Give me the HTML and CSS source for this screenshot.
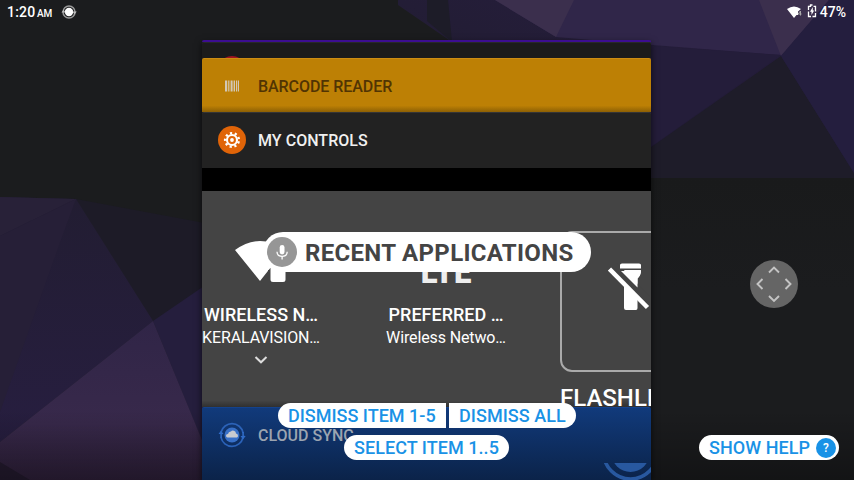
FILE: index.html
```html
<!DOCTYPE html>
<html lang="en">
<head>
<meta charset="utf-8">
<title>Recent applications</title>
<link rel="stylesheet" href="styles.css">
</head>
<body>
<div class="screen">
  <svg class="wallpaper" viewBox="0 0 854 480" aria-hidden="true">
    <defs>
      <linearGradient id="plum" x1="0" y1="0" x2="0" y2="1"><stop offset="0" stop-color="#302547"/><stop offset=".65" stop-color="#38294b"/><stop offset="1" stop-color="#30213c"/></linearGradient>
      <linearGradient id="navy" x1="0" y1="0" x2="0" y2="1"><stop offset="0" stop-color="#221d32"/><stop offset="1" stop-color="#271e40"/></linearGradient>
      <linearGradient id="topnavy" x1="0" y1="1" x2="1" y2="0"><stop offset="0" stop-color="#1e1c2b"/><stop offset="1" stop-color="#281e41"/></linearGradient>
      <linearGradient id="shade" x1="0" y1="0" x2="0" y2="1"><stop offset="0" stop-color="#000" stop-opacity="0"/><stop offset="1" stop-color="#000" stop-opacity=".3"/></linearGradient>
    </defs>
    <path fill="#1b1c1e" d="M0 0H854V480H0z"/>
    <path fill="#1d1b27" d="M76 199L210 224V480H0V197z"/>
    <path fill="url(#navy)" d="M0 197L76 199L153 321L0 442z"/>
    <path fill="#282138" d="M0 197L76 199L0 236z"/>
    <path fill="#261f37" d="M0 236L76 199L61 240L0 412z"/>
    <path fill="#251e3d" d="M153 321L210 282V460z"/>
    <path fill="url(#plum)" d="M0 442L153 321L202 440V480H0z"/>
    <path fill="#251b30" d="M0 462L30 480H0z"/>
    <path fill="url(#topnavy)" d="M398 0H854V178H640V42H452L398 5z"/>
    <path fill="#1d1c28" d="M427 0H448L452 42L427 21z"/>
    <path fill="#302649" d="M495 0H800L781 55L640 44L556 37z"/>
    <path fill="#3b2f4d" d="M495 0H574L556 37zM759 0H829L781 56z"/>
    <path fill="#241d3a" d="M640 45L781 55L651 147z"/>
    <path fill="#1e1c29" d="M781 56L854 173V178H640V155z"/>
    <path fill="#241e3e" d="M829 0H854V173L781 56z"/>
    <linearGradient id="charcoal" x1="0" y1="0" x2="0" y2="1"><stop offset="0" stop-color="#191a1b"/><stop offset="1" stop-color="#1b1c1e"/></linearGradient>
    <path fill="url(#charcoal)" d="M640 178H854V290H640z"/>
    <path fill="url(#shade)" d="M0 410H854V480H0z"/>
  </svg>

  <header class="status">
    <span class="clock">1:20 <small>AM</small></span>
    <svg class="sync-dot" viewBox="0 0 16 16" aria-hidden="true"><circle cx="8" cy="8" r="4.200" fill="#fff"/><circle cx="8" cy="8" r="6" fill="none" stroke="#999" stroke-width="1.500"/><path fill="#bbb" d="M.5 8.500L2.500 5.500 4.500 8.500zM11.500 7.500H15.700L13.600 10.500z"/></svg>
    <span class="status-right">
      <svg class="wifi" viewBox="0 0 15 13" aria-hidden="true"><path fill="#fff" d="M0 3Q7-2 14 3L11 5.500V9H9.500L7 12z"/><path fill="none" stroke="#aaa" d="M13.500 9.500V5L11 8H14.500"/></svg>
      <svg class="battery" viewBox="0 0 10 14" aria-hidden="true"><path fill="none" stroke="#fff" stroke-width="1.300" d="M5.500 1H3.500V2.300H1.500V6M1.500 7.500V12.500H4M5.500 12.500H8.500V9M8.500 7.500V2.300H6.500"/><path fill="#fff" d="M5.800 3L3 7.700H4.500V11L7.200 6.500H5.800z"/></svg>
      <span>47%</span>
    </span>
  </header>

  <main class="stack">
    <section class="card sliver"></section>
    <section class="card dark"><i class="red-icon"></i></section>
    <section class="card barcode">
      <div class="card-head">
        <svg viewBox="0 0 28 28" aria-hidden="true"><path fill="#d3c8b5" d="M7 8.500h2.200v11H7zM10.200 8.500h1.200v11h-1.200zM12.600 8.500h2v11h-2zM15.600 8.500h1.400v11h-1.400zM18 8.500h1v11h-1zM19.800 8.500h1.200v11h-1.200z"/></svg>
        <span>BARCODE READER</span>
      </div>
    </section>
    <section class="card controls">
      <div class="card-head">
        <svg viewBox="0 0 28 28" aria-hidden="true"><circle cx="14" cy="14" r="14" fill="#e06408"/><circle cx="14" cy="14" r="5" fill="none" stroke="#fff" stroke-width="2.100"/><circle cx="14" cy="14" r="6.900" fill="none" stroke="#fff" stroke-width="2.400" stroke-dasharray="2.200 2.617" stroke-dashoffset="-1.350"/><circle cx="14" cy="14" r="1.900" fill="#fff"/></svg>
        <span class="bright">MY CONTROLS</span>
      </div>
      <div class="black-bar"></div>
      <div class="tiles">
        <div class="tile">
          <svg class="tile-icon" viewBox="0 0 60 50" aria-hidden="true"><path fill="#fff" d="M4 10Q29-8 54 10L36.500 31.500 29 41zM42 25h10q2.500 0 2.500 2.500v12q0 2.500-2.500 2.500H42q-2.500 0-2.500-2.500V27.500q0-2.500 2.500-2.500z"/><path fill="none" stroke="#444" stroke-width="2" d="M38 42V30"/></svg>
          <b>WIRELESS N…</b>
          <span>KERALAVISION…</span>
          <svg class="chevron" viewBox="0 0 14 8" aria-hidden="true"><path fill="none" stroke="#ddd" stroke-width="2" d="M1.500 1L7 6.300 12.500 1"/></svg>
        </div>
        <div class="tile">
          <div class="lte">LTE</div>
          <b>PREFERRED …</b>
          <span>Wireless Netwo…</span>
        </div>
        <div class="flash-tile">
          <div class="flash-box">
            <svg viewBox="0 0 42 50" aria-hidden="true"><path fill="#fff" d="M12 7H33Q33 12 29.500 15.500V45Q29.500 47 28 47H18Q16 47 16 45V15.500Q12 12 12 7z"/><path stroke="#444" stroke-width="11" d="M4 3L42 41"/><path stroke="#fff" stroke-width="4.500" d="M1.500 6L39.500 44.500"/><path fill="#fff" d="M12 2Q12 .5 14 .5H31Q33 .5 33 2V5.500H12zM13 8H33Q33 12 29.500 15.500V24.500z"/></svg>
          </div>
          <b>FLASHLIGHT</b>
        </div>
      </div>
    </section>
    <section class="card cloud">
      <div class="card-head">
        <svg viewBox="0 0 28 28" aria-hidden="true"><circle cx="14" cy="14" r="11.300" fill="none" stroke="#2b62b8" stroke-width="1.700" stroke-dasharray="30 5.500" stroke-dashoffset="-2.800"/><path fill="#2f6bc6" d="M.5 13L3 9.500 5.500 13 3.900 13.300V17H2.300V13zM22.500 15L25 18.500 27.700 15 25.900 14.700V11H24.300V15z"/><circle cx="14" cy="14" r="7.500" fill="#3870c8"/><path fill="#c9cbd0" d="M9.500 16.500Q8 16.500 8 14.700T10 13Q10.500 10.300 13 10.500 14 9 16 9.800 18 10.500 18 12.500 20 12.800 20 14.800T18.500 16.500z"/></svg>
        <span>CLOUD SYNC</span>
      </div>
      <svg class="splash" viewBox="0 0 49 17" aria-hidden="true"><circle cx="28.500" cy="-10" r="19" fill="#28589f"/><circle cx="28.500" cy="-11" r="27" fill="none" stroke="#28589f" stroke-width="3.600"/></svg>
    </section>
  </main>

  <div class="title-pill">
    <svg viewBox="0 0 30 30" aria-hidden="true"><circle cx="15" cy="15" r="15" fill="#969696"/><rect x="12.700" y="8" width="4.800" height="9.500" rx="2.400" fill="#fff"/><path fill="none" stroke="#fff" stroke-width="1.300" d="M10 14.700Q10 19.300 15.100 19.300T20.200 14.700M15.100 19V22.500"/></svg>
    <span>RECENT APPLICATIONS</span>
  </div>
  <div class="pills dismiss"><button class="pill first">DISMISS ITEM 1-5</button><button class="pill last">DISMISS ALL</button></div>
  <button class="pill select">SELECT ITEM 1..5</button>
  <button class="pill help">SHOW HELP<span class="help-dot">?</span></button>
  <svg class="dpad" viewBox="0 0 48 48" aria-hidden="true"><circle cx="24" cy="24" r="24" fill="#656565"/><path fill="none" stroke="#c4c4c4" stroke-width="1.900" d="M19 12.500L24 7.500 29 12.500M19 36L24 41 29 36M12.500 19L7.500 24 12.500 29M35.500 19L40.500 24 35.500 29"/></svg>
</div>
</body>
</html>
```
FILE: styles.css
```css
* { box-sizing: border-box; }
body {
  margin: 0;
  background: #1b1c1e;
  font-family: Roboto, "Liberation Sans", sans-serif;
}
.screen {
  position: relative;
  width: 854px;
  height: 480px;
  overflow: hidden;
}
.wallpaper { position: absolute; inset: 0; width: 854px; height: 480px; }
svg { display: block; flex: none; }

.status {
  position: relative;
  display: flex;
  align-items: center;
  height: 40px;
  padding: 0 8px 16px 7px;
  color: #fff;
  font-size: 14px;
  font-weight: 500;
}
.clock { width: 54px; white-space: nowrap; letter-spacing: .2px; }
.clock small { font-size: 10px; margin-left: -2px; letter-spacing: -.2px; }
.sync-dot { width: 16px; height: 16px; }
.status-right { display: flex; align-items: center; margin-left: auto; }
.wifi { width: 15px; height: 13px; margin-right: 5px; }
.battery { width: 10px; height: 14px; margin: -3px 3px 0 0; }

.stack {
  position: relative;
  display: flex;
  flex-direction: column;
  width: 449px;
  height: 440px;
  margin-left: 202px;
  box-shadow: 0 3px 7px rgba(0, 0, 0, .65);
}
.card { flex: none; overflow: hidden; border-radius: 2px 2px 0 0; }
.sliver { height: 2px; background: #3c0d91; }
.dark { height: 16px; background: #1b1b1b; border-top: 1px solid #282828; }
.red-icon { display: block; width: 28px; height: 28px; margin: 13px 0 0 16px; border-radius: 50%; background: #a01420; }
.barcode {
  height: 54px;
  background: linear-gradient(#bd8005 88%, #8d6004);
  border-top: 1px solid #cc8c12;
  color: #513403;
}
.barcode span { letter-spacing: -.06px; }
.controls { height: 295px; background: #222; border-top: 1px solid #353535; color: #f0f0f0; }
.bright { letter-spacing: .04px; }
.cloud {
  position: relative;
  height: 73px;
  background: linear-gradient(#113a7b, #0b2349);
  border-top: 1px solid #14428c;
  color: #9ba4b0;
}
.card-head {
  display: flex;
  align-items: center;
  gap: 12px;
  height: 55px;
  padding-left: 16px;
  font-size: 16px;
  font-weight: 500;
}
.card-head svg { width: 28px; height: 28px; margin-top: -1px; }
.black-bar { height: 23px; background: #000; }
.tiles {
  display: flex;
  height: 216px;
  background: linear-gradient(#444 97%, #303030);
  color: #fff;
}
.tile {
  display: flex;
  flex: none;
  flex-direction: column;
  align-items: center;
  width: 118px;
  margin-right: 67px;
  padding-top: 49px;
  white-space: nowrap;
}
.tile b { font-size: 18px; font-weight: 500; line-height: 23px; margin-top: 13px; }
.tile span { font-size: 16px; line-height: 22px; margin-top: 1px; letter-spacing: -.12px; }
.tile-icon { width: 60px; height: 50px; }
.lte { height: 50px; padding-top: 12px; font-size: 31px; font-weight: 900; line-height: 42px; color: #eee; }
.chevron { width: 14px; height: 8px; margin-top: 7px; }
.flash-tile { flex: none; width: 142px; margin-left: -12px; padding-top: 40px; }
.flash-box {
  height: 141px;
  padding: 30px 0 0 46px;
  border: 2px solid #aaa;
  border-radius: 12px;
}
.flash-box svg { width: 42px; height: 50px; }
.flash-tile b { display: block; margin-top: 12px; font-size: 24px; font-weight: 500; line-height: 28px; }
.splash { position: absolute; right: 0; bottom: 0; width: 49px; height: 17px; }

.title-pill {
  position: absolute;
  left: 263px;
  top: 232px;
  display: flex;
  align-items: center;
  gap: 8px;
  width: 328px;
  height: 40px;
  padding-left: 4px;
  border-radius: 20px;
  background: #fff;
  color: #444;
  font-size: 24px;
  font-weight: 700;
  letter-spacing: .32px;
  white-space: nowrap;
}
.title-pill svg { width: 30px; height: 30px; }
.title-pill span { padding-top: 2px; }
.pills { position: absolute; display: flex; gap: 3px; }
.dismiss { left: 278px; top: 403px; }
.pill {
  display: flex;
  align-items: center;
  height: 25px;
  padding: 0 10px;
  border: 0;
  border-radius: 13px;
  background: #fff;
  color: #1992e6;
  font: 500 18px Roboto, "Liberation Sans", sans-serif;
  white-space: nowrap;
}
.first { width: 168px; border-radius: 13px 0 0 13px; }
.last { width: 127px; border-radius: 0 13px 13px 0; letter-spacing: .05px; }
.select { position: absolute; left: 344px; top: 435px; width: 165px; letter-spacing: .05px; }
.help { position: absolute; left: 699px; top: 435px; width: 140px; padding-right: 3px; justify-content: space-between; letter-spacing: .07px; }
.help-dot {
  width: 20px;
  height: 20px;
  border-radius: 50%;
  background: #1992e6;
  color: #fff;
  font-size: 12px;
  line-height: 21px;
  text-align: center;
}
.dpad { position: absolute; left: 750px; top: 260px; width: 48px; height: 48px; }
```
